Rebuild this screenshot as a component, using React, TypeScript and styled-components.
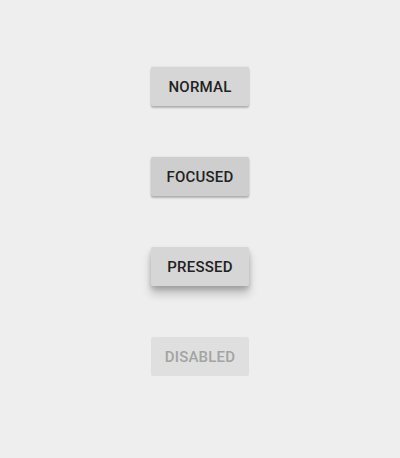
import styled, { createGlobalStyle, css } from 'styled-components';

type Variant = 'normal' | 'focused' | 'pressed' | 'disabled';

const buttons: { label: string; variant: Variant }[] = [
	{ label: 'Normal', variant: 'normal' },
	{ label: 'Focused', variant: 'focused' },
	{ label: 'Pressed', variant: 'pressed' },
	{ label: 'Disabled', variant: 'disabled' },
];

export default function App() {
	return (
		<>
			<GlobalStyle />
			<Page>
				{buttons.map((b) => (
					<Button key={b.label} $variant={b.variant} disabled={b.variant === 'disabled'}>
						{b.label}
					</Button>
				))}
			</Page>
		</>
	);
}

const GlobalStyle = createGlobalStyle`
	html, body {
		margin: 0;
		padding: 0;
		background: #eeeeee;
	}
`;

const Page = styled.div`
	width: 400px;
	height: 458px;

	display: flex;
	flex-direction: column;
	align-items: center;
	gap: 51px;

	padding-top: 67px;
	box-sizing: border-box;
	background: #eeeeee;
`;

const variants = {
	normal: css`
		background: #d6d6d6;
		box-shadow: 0 2px 2px rgba(0, 0, 0, 0.24), 0 0 2px rgba(0, 0, 0, 0.12);
	`,
	focused: css`
		background: #cecece;
		box-shadow: 0 2px 2px rgba(0, 0, 0, 0.24), 0 0 2px rgba(0, 0, 0, 0.12);
	`,
	pressed: css`
		background: #d6d6d6;
		box-shadow: 0 8px 10px rgba(0, 0, 0, 0.2), 0 3px 5px rgba(0, 0, 0, 0.18);
	`,
	disabled: css`
		background: #dfdfdf;
		color: #a3a3a3;
		box-shadow: none;
	`,
};

const Button = styled.button<{ $variant: Variant }>`
	width: 98px;
	height: 39px;
	padding: 0;

	border: none;
	border-radius: 2px;
	color: #222222;

	font-family: Roboto, 'Noto Sans', sans-serif;
	font-size: 15px;
	font-weight: 500;
	letter-spacing: 0.2px;
	text-transform: uppercase;

	${({ $variant }) => variants[$variant]}
`;
